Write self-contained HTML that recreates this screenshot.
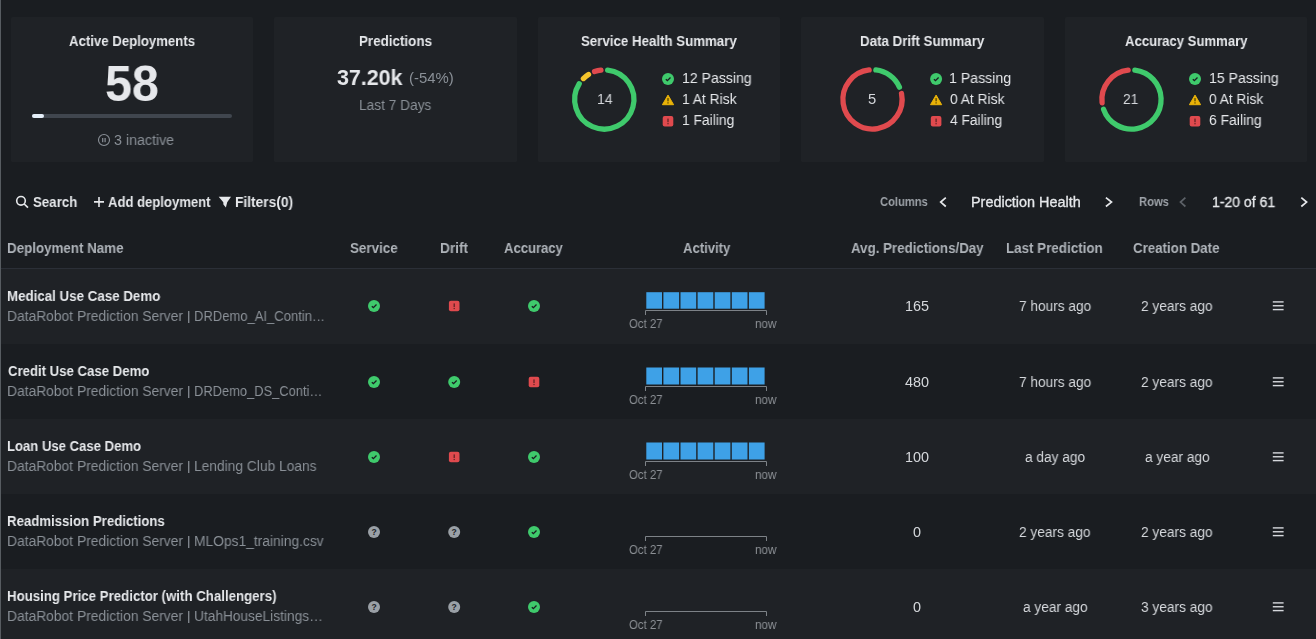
<!DOCTYPE html>
<html><head><meta charset="utf-8"><style>
html,body{margin:0;padding:0}
body{width:1316px;height:639px;overflow:hidden;background:#1a1d21;position:relative;font-family:"Liberation Sans",sans-serif}
.card{position:absolute;top:17px;height:145px;background:#1f2226;border-radius:1.5px}
.row{position:absolute;left:0;width:1316px;height:75px}
.t{position:absolute;white-space:pre;transform-origin:0 0;will-change:transform}
.lb{position:absolute;left:0;top:0;width:1px;height:639px;background:#575c61}
.hl{position:absolute;left:0;top:268px;width:1316px;height:1px;background:#2b2f37}
.track{position:absolute;left:31.7px;top:114.2px;width:200.3px;height:4px;border-radius:2px;background:#40464e}
.fill{position:absolute;left:31.7px;top:114.2px;width:12.2px;height:4px;border-radius:2px;background:#e4eef8}
svg{position:absolute;left:0;top:0}
</style></head><body>
<div class="card" style="left:11px;width:242px"></div><div class="card" style="left:274px;width:243px"></div><div class="card" style="left:538px;width:242px"></div><div class="card" style="left:801px;width:243px"></div><div class="card" style="left:1065px;width:242px"></div>
<div class="row" style="top:269px;background:#1f2226"></div><div class="row" style="top:344px;background:#1a1d21"></div><div class="row" style="top:419px;background:#1f2226"></div><div class="row" style="top:494px;background:#1a1d21"></div><div class="row" style="top:569px;background:#1f2226"></div>
<div class="hl"></div>
<div class="track"></div><div class="fill"></div>
<svg width="1316" height="639" viewBox="0 0 1316 639"><path d="M607.65 70.09A29.6 29.6 0 1 1 579.22 83.78" stroke="#3fca6c" stroke-width="5.3" stroke-linecap="round" fill="none"/><path d="M583.40 78.54A29.6 29.6 0 0 1 588.52 74.46" stroke="#f5c42b" stroke-width="5.3" stroke-linecap="round" fill="none"/><path d="M594.56 71.55A29.6 29.6 0 0 1 600.95 70.09" stroke="#e04a4e" stroke-width="5.3" stroke-linecap="round" fill="none"/><path d="M875.85 69.99A29.6 29.6 0 0 1 899.43 87.13" stroke="#3fca6c" stroke-width="5.3" stroke-linecap="round" fill="none"/><path d="M901.51 93.50A29.6 29.6 0 1 1 869.15 69.99" stroke="#e04a4e" stroke-width="5.3" stroke-linecap="round" fill="none"/><path d="M1134.85 70.09A29.6 29.6 0 1 1 1103.57 109.31" stroke="#3fca6c" stroke-width="5.3" stroke-linecap="round" fill="none"/><path d="M1102.08 102.78A29.6 29.6 0 0 1 1128.15 70.09" stroke="#e04a4e" stroke-width="5.3" stroke-linecap="round" fill="none"/><circle cx="668" cy="79" r="6" fill="#3fca6c"/><path d="M665.80 79.20L667.40 80.60L670.50 77.50" stroke="#1b1e22" stroke-width="1.3" fill="none"/><path d="M668 95.1L673.6 104.7L662.4 104.7Z" fill="#eab308" stroke="#eab308" stroke-width="1" stroke-linejoin="round"/><rect x="667.40" y="98.10" width="1.2" height="3.2" fill="#4a3a00"/><rect x="667.40" y="102.30" width="1.2" height="1.2" fill="#4a3a00"/><rect x="662.7" y="115.9" width="10.6" height="10.6" rx="2" fill="#e04a4e"/><rect x="667.40" y="118.60" width="1.2" height="3.6" fill="#5a2022"/><rect x="667.40" y="123.10" width="1.2" height="1.2" fill="#5a2022"/><circle cx="936.1" cy="79" r="6" fill="#3fca6c"/><path d="M933.90 79.20L935.50 80.60L938.60 77.50" stroke="#1b1e22" stroke-width="1.3" fill="none"/><path d="M936.1 95.1L941.7 104.7L930.5 104.7Z" fill="#eab308" stroke="#eab308" stroke-width="1" stroke-linejoin="round"/><rect x="935.50" y="98.10" width="1.2" height="3.2" fill="#4a3a00"/><rect x="935.50" y="102.30" width="1.2" height="1.2" fill="#4a3a00"/><rect x="930.8000000000001" y="115.9" width="10.6" height="10.6" rx="2" fill="#e04a4e"/><rect x="935.50" y="118.60" width="1.2" height="3.6" fill="#5a2022"/><rect x="935.50" y="123.10" width="1.2" height="1.2" fill="#5a2022"/><circle cx="1195" cy="79" r="6" fill="#3fca6c"/><path d="M1192.80 79.20L1194.40 80.60L1197.50 77.50" stroke="#1b1e22" stroke-width="1.3" fill="none"/><path d="M1195 95.1L1200.6 104.7L1189.4 104.7Z" fill="#eab308" stroke="#eab308" stroke-width="1" stroke-linejoin="round"/><rect x="1194.40" y="98.10" width="1.2" height="3.2" fill="#4a3a00"/><rect x="1194.40" y="102.30" width="1.2" height="1.2" fill="#4a3a00"/><rect x="1189.7" y="115.9" width="10.6" height="10.6" rx="2" fill="#e04a4e"/><rect x="1194.40" y="118.60" width="1.2" height="3.6" fill="#5a2022"/><rect x="1194.40" y="123.10" width="1.2" height="1.2" fill="#5a2022"/><circle cx="374" cy="306" r="6" fill="#3fca6c"/><path d="M371.80 306.20L373.40 307.60L376.50 304.50" stroke="#1b1e22" stroke-width="1.3" fill="none"/><rect x="448.9" y="300.7" width="10.6" height="10.6" rx="2" fill="#e04a4e"/><rect x="453.60" y="303.40" width="1.2" height="3.6" fill="#5a2022"/><rect x="453.60" y="307.90" width="1.2" height="1.2" fill="#5a2022"/><circle cx="534" cy="306" r="6" fill="#3fca6c"/><path d="M531.80 306.20L533.40 307.60L536.50 304.50" stroke="#1b1e22" stroke-width="1.3" fill="none"/><rect x="646.30" y="292.20" width="15.7" height="16.50" fill="#3ea1e7"/><rect x="663.40" y="292.20" width="15.7" height="16.50" fill="#3ea1e7"/><rect x="680.50" y="292.20" width="15.7" height="16.50" fill="#3ea1e7"/><rect x="697.60" y="292.20" width="15.7" height="16.50" fill="#3ea1e7"/><rect x="714.70" y="292.20" width="15.7" height="16.50" fill="#3ea1e7"/><rect x="731.80" y="292.20" width="15.7" height="16.50" fill="#3ea1e7"/><rect x="748.90" y="292.20" width="15.7" height="16.50" fill="#3ea1e7"/><path d="M645.5 315.0V310.5H766.5V315.0" stroke="#7d8287" stroke-width="1" fill="none"/><rect x="188.1" y="311" width="1.25" height="12" fill="#8a9097"/><rect x="1272.8" y="301.20" width="10.8" height="1.4" fill="#d5d8dc"/><rect x="1272.8" y="305.05" width="10.8" height="1.4" fill="#d5d8dc"/><rect x="1272.8" y="308.90" width="10.8" height="1.4" fill="#d5d8dc"/><circle cx="374" cy="382" r="6" fill="#3fca6c"/><path d="M371.80 382.20L373.40 383.60L376.50 380.50" stroke="#1b1e22" stroke-width="1.3" fill="none"/><circle cx="454.2" cy="382" r="6" fill="#3fca6c"/><path d="M452.00 382.20L453.60 383.60L456.70 380.50" stroke="#1b1e22" stroke-width="1.3" fill="none"/><rect x="528.7" y="376.7" width="10.6" height="10.6" rx="2" fill="#e04a4e"/><rect x="533.40" y="379.40" width="1.2" height="3.6" fill="#5a2022"/><rect x="533.40" y="383.90" width="1.2" height="1.2" fill="#5a2022"/><rect x="646.30" y="367.50" width="15.7" height="17.00" fill="#3ea1e7"/><rect x="663.40" y="367.50" width="15.7" height="17.00" fill="#3ea1e7"/><rect x="680.50" y="367.50" width="15.7" height="17.00" fill="#3ea1e7"/><rect x="697.60" y="367.50" width="15.7" height="17.00" fill="#3ea1e7"/><rect x="714.70" y="367.50" width="15.7" height="17.00" fill="#3ea1e7"/><rect x="731.80" y="367.50" width="15.7" height="17.00" fill="#3ea1e7"/><rect x="748.90" y="367.50" width="15.7" height="17.00" fill="#3ea1e7"/><path d="M645.5 391.0V386.5H766.5V391.0" stroke="#7d8287" stroke-width="1" fill="none"/><rect x="188.1" y="386" width="1.25" height="12" fill="#8a9097"/><rect x="1272.8" y="377.20" width="10.8" height="1.4" fill="#d5d8dc"/><rect x="1272.8" y="381.05" width="10.8" height="1.4" fill="#d5d8dc"/><rect x="1272.8" y="384.90" width="10.8" height="1.4" fill="#d5d8dc"/><circle cx="374" cy="457" r="6" fill="#3fca6c"/><path d="M371.80 457.20L373.40 458.60L376.50 455.50" stroke="#1b1e22" stroke-width="1.3" fill="none"/><rect x="448.9" y="451.7" width="10.6" height="10.6" rx="2" fill="#e04a4e"/><rect x="453.60" y="454.40" width="1.2" height="3.6" fill="#5a2022"/><rect x="453.60" y="458.90" width="1.2" height="1.2" fill="#5a2022"/><circle cx="534" cy="457" r="6" fill="#3fca6c"/><path d="M531.80 457.20L533.40 458.60L536.50 455.50" stroke="#1b1e22" stroke-width="1.3" fill="none"/><rect x="646.30" y="442.50" width="15.7" height="17.00" fill="#3ea1e7"/><rect x="663.40" y="442.50" width="15.7" height="17.00" fill="#3ea1e7"/><rect x="680.50" y="442.50" width="15.7" height="17.00" fill="#3ea1e7"/><rect x="697.60" y="442.50" width="15.7" height="17.00" fill="#3ea1e7"/><rect x="714.70" y="442.50" width="15.7" height="17.00" fill="#3ea1e7"/><rect x="731.80" y="442.50" width="15.7" height="17.00" fill="#3ea1e7"/><rect x="748.90" y="442.50" width="15.7" height="17.00" fill="#3ea1e7"/><path d="M645.5 466.0V461.5H766.5V466.0" stroke="#7d8287" stroke-width="1" fill="none"/><rect x="188.1" y="461" width="1.25" height="12" fill="#8a9097"/><rect x="1272.8" y="452.20" width="10.8" height="1.4" fill="#d5d8dc"/><rect x="1272.8" y="456.05" width="10.8" height="1.4" fill="#d5d8dc"/><rect x="1272.8" y="459.90" width="10.8" height="1.4" fill="#d5d8dc"/><circle cx="374" cy="532" r="6" fill="#9aa0a6"/><text x="374" y="535" font-family="Liberation Sans" font-weight="700" font-size="8.5" fill="#202327" text-anchor="middle">?</text><circle cx="454.2" cy="532" r="6" fill="#9aa0a6"/><text x="454.2" y="535" font-family="Liberation Sans" font-weight="700" font-size="8.5" fill="#202327" text-anchor="middle">?</text><circle cx="534" cy="532" r="6" fill="#3fca6c"/><path d="M531.80 532.20L533.40 533.60L536.50 530.50" stroke="#1b1e22" stroke-width="1.3" fill="none"/><path d="M645.5 541.0V536.5H766.5V541.0" stroke="#7d8287" stroke-width="1" fill="none"/><rect x="188.1" y="536" width="1.25" height="12" fill="#8a9097"/><rect x="1272.8" y="527.20" width="10.8" height="1.4" fill="#d5d8dc"/><rect x="1272.8" y="531.05" width="10.8" height="1.4" fill="#d5d8dc"/><rect x="1272.8" y="534.90" width="10.8" height="1.4" fill="#d5d8dc"/><circle cx="374" cy="607" r="6" fill="#9aa0a6"/><text x="374" y="610" font-family="Liberation Sans" font-weight="700" font-size="8.5" fill="#202327" text-anchor="middle">?</text><circle cx="454.2" cy="607" r="6" fill="#9aa0a6"/><text x="454.2" y="610" font-family="Liberation Sans" font-weight="700" font-size="8.5" fill="#202327" text-anchor="middle">?</text><circle cx="534" cy="607" r="6" fill="#3fca6c"/><path d="M531.80 607.20L533.40 608.60L536.50 605.50" stroke="#1b1e22" stroke-width="1.3" fill="none"/><path d="M645.5 616.0V611.5H766.5V616.0" stroke="#7d8287" stroke-width="1" fill="none"/><rect x="188.1" y="611" width="1.25" height="12" fill="#8a9097"/><rect x="1272.8" y="602.20" width="10.8" height="1.4" fill="#d5d8dc"/><rect x="1272.8" y="606.05" width="10.8" height="1.4" fill="#d5d8dc"/><rect x="1272.8" y="609.90" width="10.8" height="1.4" fill="#d5d8dc"/><circle cx="21" cy="200.8" r="4.3" stroke="#e6e8eb" stroke-width="1.6" fill="none"/><path d="M24.2 204L28 207.6" stroke="#e6e8eb" stroke-width="1.7"/><path d="M94 201.9H104M99 196.9V206.9" stroke="#e6e8eb" stroke-width="1.6"/><path d="M218.7 196.8L231 196.8L227.2 202.3L225.9 207.6L223.4 204.6L223.3 202.3Z" fill="#e6e8eb"/><path d="M945.80 197.60L940.70 202.05L945.80 206.50" stroke="#e6e8eb" stroke-width="1.7" fill="none"/><path d="M1105.90 197.60L1111.50 202.05L1105.90 206.50" stroke="#e6e8eb" stroke-width="1.7" fill="none"/><path d="M1185.40 197.60L1180.50 202.05L1185.40 206.50" stroke="#5d6268" stroke-width="1.7" fill="none"/><path d="M1301.30 197.60L1306.60 202.05L1301.30 206.50" stroke="#e6e8eb" stroke-width="1.7" fill="none"/><circle cx="104" cy="140" r="5.5" stroke="#8a9097" stroke-width="1.1" fill="none"/><rect x="102.1" y="138" width="1.2" height="4.2" fill="#8a9097"/><rect x="104.5" y="138" width="1.2" height="4.2" fill="#8a9097"/></svg>
<div class="t" style="left:68.53px;top:33.79px;font-size:14.42px;line-height:14.42px;font-weight:700;color:#e6e8eb;transform:scaleX(0.9152)">Active Deployments</div><div class="t" style="left:104.80px;top:58.75px;font-size:49.44px;line-height:49.44px;font-weight:700;color:#e6e8eb;transform:scaleX(0.9790)">58</div><div class="t" style="left:113.67px;top:132.79px;font-size:14.42px;line-height:14.42px;font-weight:400;color:#8a9097;transform:scaleX(0.9880)">3 inactive</div><div class="t" style="left:358.77px;top:33.59px;font-size:14.42px;line-height:14.42px;font-weight:700;color:#e6e8eb;transform:scaleX(0.9299)">Predictions</div><div class="t" style="left:336.81px;top:66.69px;font-size:21.63px;line-height:21.63px;font-weight:700;color:#e6e8eb;transform:scaleX(0.9910)">37.20k</div><div class="t" style="left:409.02px;top:70.79px;font-size:14.42px;line-height:14.42px;font-weight:400;color:#8a9097;transform:scaleX(1.0336)">(-54%)</div><div class="t" style="left:358.75px;top:97.79px;font-size:14.42px;line-height:14.42px;font-weight:400;color:#8a9097;transform:scaleX(0.9507)">Last 7 Days</div><div class="t" style="left:580.93px;top:34.29px;font-size:14.42px;line-height:14.42px;font-weight:700;color:#e6e8eb;transform:scaleX(0.9219)">Service Health Summary</div><div class="t" style="left:859.83px;top:34.29px;font-size:14.42px;line-height:14.42px;font-weight:700;color:#e6e8eb;transform:scaleX(0.9240)">Data Drift Summary</div><div class="t" style="left:1124.53px;top:34.29px;font-size:14.42px;line-height:14.42px;font-weight:700;color:#e6e8eb;transform:scaleX(0.9106)">Accuracy Summary</div><div class="t" style="left:596.56px;top:91.79px;font-size:14.42px;line-height:14.42px;font-weight:400;color:#d5d8dc;transform:scaleX(0.9693)">14</div><div class="t" style="left:868.30px;top:91.79px;font-size:14.42px;line-height:14.42px;font-weight:400;color:#d5d8dc;transform:scaleX(1.0227)">5</div><div class="t" style="left:1122.95px;top:91.79px;font-size:14.42px;line-height:14.42px;font-weight:400;color:#d5d8dc;transform:scaleX(0.9569)">21</div><div class="t" style="left:681.64px;top:70.89px;font-size:14.42px;line-height:14.42px;font-weight:400;color:#e6e8eb;transform:scaleX(0.9768)">12 Passing</div><div class="t" style="left:681.74px;top:91.99px;font-size:14.42px;line-height:14.42px;font-weight:400;color:#e6e8eb;transform:scaleX(0.9589)">1 At Risk</div><div class="t" style="left:681.74px;top:112.79px;font-size:14.42px;line-height:14.42px;font-weight:400;color:#e6e8eb;transform:scaleX(0.9585)">1 Failing</div><div class="t" style="left:949.34px;top:70.89px;font-size:14.42px;line-height:14.42px;font-weight:400;color:#e6e8eb;transform:scaleX(0.9820)">1 Passing</div><div class="t" style="left:949.80px;top:91.99px;font-size:14.42px;line-height:14.42px;font-weight:400;color:#e6e8eb;transform:scaleX(0.9563)">0 At Risk</div><div class="t" style="left:950.20px;top:112.79px;font-size:14.42px;line-height:14.42px;font-weight:400;color:#e6e8eb;transform:scaleX(0.9552)">4 Failing</div><div class="t" style="left:1208.94px;top:70.89px;font-size:14.42px;line-height:14.42px;font-weight:400;color:#e6e8eb;transform:scaleX(0.9768)">15 Passing</div><div class="t" style="left:1209.39px;top:91.99px;font-size:14.42px;line-height:14.42px;font-weight:400;color:#e6e8eb;transform:scaleX(0.9522)">0 At Risk</div><div class="t" style="left:1209.20px;top:112.79px;font-size:14.42px;line-height:14.42px;font-weight:400;color:#e6e8eb;transform:scaleX(0.9658)">6 Failing</div><div class="t" style="left:32.53px;top:194.79px;font-size:14.42px;line-height:14.42px;font-weight:700;color:#e6e8eb;transform:scaleX(0.9220)">Search</div><div class="t" style="left:108.33px;top:194.79px;font-size:14.42px;line-height:14.42px;font-weight:700;color:#e6e8eb;transform:scaleX(0.9083)">Add deployment</div><div class="t" style="left:234.72px;top:194.79px;font-size:14.42px;line-height:14.42px;font-weight:700;color:#e6e8eb;transform:scaleX(0.9553)">Filters(0)</div><div class="t" style="left:879.92px;top:196.44px;font-size:12.36px;line-height:12.36px;font-weight:700;color:#9ea3a9;transform:scaleX(0.9035)">Columns</div><div class="t" style="left:971.30px;top:194.69px;font-size:14.42px;line-height:14.42px;font-weight:400;color:#e6e8eb;-webkit-text-stroke:0.3px #e6e8eb;transform:scaleX(0.9963)">Prediction Health</div><div class="t" style="left:1138.91px;top:196.44px;font-size:12.36px;line-height:12.36px;font-weight:700;color:#9ea3a9;transform:scaleX(0.9094)">Rows</div><div class="t" style="left:1211.92px;top:194.69px;font-size:14.42px;line-height:14.42px;font-weight:400;color:#e6e8eb;-webkit-text-stroke:0.3px #e6e8eb;transform:scaleX(0.9752)">1-20 of 61</div><div class="t" style="left:7.41px;top:240.69px;font-size:14.42px;line-height:14.42px;font-weight:700;color:#aeb3b9;transform:scaleX(0.9270)">Deployment Name</div><div class="t" style="left:349.87px;top:240.69px;font-size:14.42px;line-height:14.42px;font-weight:700;color:#aeb3b9;transform:scaleX(0.9305)">Service</div><div class="t" style="left:439.72px;top:240.69px;font-size:14.42px;line-height:14.42px;font-weight:700;color:#aeb3b9;transform:scaleX(0.9484)">Drift</div><div class="t" style="left:504.46px;top:240.69px;font-size:14.42px;line-height:14.42px;font-weight:700;color:#aeb3b9;transform:scaleX(0.9077)">Accuracy</div><div class="t" style="left:683.26px;top:240.69px;font-size:14.42px;line-height:14.42px;font-weight:700;color:#aeb3b9;transform:scaleX(0.9092)">Activity</div><div class="t" style="left:850.66px;top:240.69px;font-size:14.42px;line-height:14.42px;font-weight:700;color:#aeb3b9;transform:scaleX(0.9235)">Avg. Predictions/Day</div><div class="t" style="left:1006.30px;top:240.69px;font-size:14.42px;line-height:14.42px;font-weight:700;color:#aeb3b9;transform:scaleX(0.9292)">Last Prediction</div><div class="t" style="left:1133.37px;top:240.69px;font-size:14.42px;line-height:14.42px;font-weight:700;color:#aeb3b9;transform:scaleX(0.9231)">Creation Date</div><div class="t" style="left:7.43px;top:289.49px;font-size:14.42px;line-height:14.42px;font-weight:700;color:#e6e8eb;transform:scaleX(0.9248)">Medical Use Case Demo</div><div class="t" style="left:7.29px;top:308.79px;font-size:14.42px;line-height:14.42px;font-weight:400;color:#8a9097;transform:scaleX(0.9599)">DataRobot Prediction Server</div><div class="t" style="left:193.81px;top:308.79px;font-size:14.42px;line-height:14.42px;font-weight:400;color:#8a9097;transform:scaleX(0.9041)">DRDemo_AI_Contin…</div><div class="t" style="left:904.60px;top:298.79px;font-size:14.42px;line-height:14.42px;font-weight:400;color:#d5d8dc;transform:scaleX(1.0000)">165</div><div class="t" style="left:1019.00px;top:298.79px;font-size:14.42px;line-height:14.42px;font-weight:400;color:#d5d8dc;transform:scaleX(0.9500)">7 hours ago</div><div class="t" style="left:1141.34px;top:298.79px;font-size:14.42px;line-height:14.42px;font-weight:400;color:#d5d8dc;transform:scaleX(0.9510)">2 years ago</div><div class="t" style="left:628.80px;top:317.54px;font-size:12.36px;line-height:12.36px;font-weight:400;color:#8d9196;transform:scaleX(0.9222)">Oct 27</div><div class="t" style="left:754.86px;top:317.54px;font-size:12.36px;line-height:12.36px;font-weight:400;color:#8d9196;transform:scaleX(0.9435)">now</div><div class="t" style="left:7.72px;top:364.49px;font-size:14.42px;line-height:14.42px;font-weight:700;color:#e6e8eb;transform:scaleX(0.9143)">Credit Use Case Demo</div><div class="t" style="left:7.29px;top:383.79px;font-size:14.42px;line-height:14.42px;font-weight:400;color:#8a9097;transform:scaleX(0.9601)">DataRobot Prediction Server</div><div class="t" style="left:193.80px;top:383.79px;font-size:14.42px;line-height:14.42px;font-weight:400;color:#8a9097;transform:scaleX(0.8949)">DRDemo_DS_Conti…</div><div class="t" style="left:905.10px;top:374.79px;font-size:14.42px;line-height:14.42px;font-weight:400;color:#d5d8dc;transform:scaleX(1.0000)">480</div><div class="t" style="left:1019.00px;top:374.79px;font-size:14.42px;line-height:14.42px;font-weight:400;color:#d5d8dc;transform:scaleX(0.9500)">7 hours ago</div><div class="t" style="left:1141.34px;top:374.79px;font-size:14.42px;line-height:14.42px;font-weight:400;color:#d5d8dc;transform:scaleX(0.9510)">2 years ago</div><div class="t" style="left:628.80px;top:393.54px;font-size:12.36px;line-height:12.36px;font-weight:400;color:#8d9196;transform:scaleX(0.9222)">Oct 27</div><div class="t" style="left:754.86px;top:393.54px;font-size:12.36px;line-height:12.36px;font-weight:400;color:#8d9196;transform:scaleX(0.9435)">now</div><div class="t" style="left:7.42px;top:439.49px;font-size:14.42px;line-height:14.42px;font-weight:700;color:#e6e8eb;transform:scaleX(0.9098)">Loan Use Case Demo</div><div class="t" style="left:7.29px;top:458.79px;font-size:14.42px;line-height:14.42px;font-weight:400;color:#8a9097;transform:scaleX(0.9599)">DataRobot Prediction Server</div><div class="t" style="left:193.79px;top:458.79px;font-size:14.42px;line-height:14.42px;font-weight:400;color:#8a9097;transform:scaleX(0.9556)">Lending Club Loans</div><div class="t" style="left:904.60px;top:449.79px;font-size:14.42px;line-height:14.42px;font-weight:400;color:#d5d8dc;transform:scaleX(1.0000)">100</div><div class="t" style="left:1025.17px;top:449.79px;font-size:14.42px;line-height:14.42px;font-weight:400;color:#d5d8dc;transform:scaleX(0.9500)">a day ago</div><div class="t" style="left:1144.67px;top:449.79px;font-size:14.42px;line-height:14.42px;font-weight:400;color:#d5d8dc;transform:scaleX(0.9510)">a year ago</div><div class="t" style="left:628.80px;top:468.54px;font-size:12.36px;line-height:12.36px;font-weight:400;color:#8d9196;transform:scaleX(0.9222)">Oct 27</div><div class="t" style="left:754.86px;top:468.54px;font-size:12.36px;line-height:12.36px;font-weight:400;color:#8d9196;transform:scaleX(0.9435)">now</div><div class="t" style="left:7.43px;top:514.49px;font-size:14.42px;line-height:14.42px;font-weight:700;color:#e6e8eb;transform:scaleX(0.9168)">Readmission Predictions</div><div class="t" style="left:7.29px;top:533.79px;font-size:14.42px;line-height:14.42px;font-weight:400;color:#8a9097;transform:scaleX(0.9601)">DataRobot Prediction Server</div><div class="t" style="left:193.80px;top:533.79px;font-size:14.42px;line-height:14.42px;font-weight:400;color:#8a9097;transform:scaleX(0.9580)">MLOps1_training.csv</div><div class="t" style="left:913.10px;top:524.79px;font-size:14.42px;line-height:14.42px;font-weight:400;color:#d5d8dc;transform:scaleX(1.0000)">0</div><div class="t" style="left:1019.47px;top:524.79px;font-size:14.42px;line-height:14.42px;font-weight:400;color:#d5d8dc;transform:scaleX(0.9500)">2 years ago</div><div class="t" style="left:1141.34px;top:524.79px;font-size:14.42px;line-height:14.42px;font-weight:400;color:#d5d8dc;transform:scaleX(0.9510)">2 years ago</div><div class="t" style="left:628.80px;top:543.54px;font-size:12.36px;line-height:12.36px;font-weight:400;color:#8d9196;transform:scaleX(0.9222)">Oct 27</div><div class="t" style="left:754.86px;top:543.54px;font-size:12.36px;line-height:12.36px;font-weight:400;color:#8d9196;transform:scaleX(0.9435)">now</div><div class="t" style="left:7.42px;top:589.49px;font-size:14.42px;line-height:14.42px;font-weight:700;color:#e6e8eb;transform:scaleX(0.9197)">Housing Price Predictor (with Challengers)</div><div class="t" style="left:7.29px;top:608.79px;font-size:14.42px;line-height:14.42px;font-weight:400;color:#8a9097;transform:scaleX(0.9599)">DataRobot Prediction Server</div><div class="t" style="left:193.82px;top:608.79px;font-size:14.42px;line-height:14.42px;font-weight:400;color:#8a9097;transform:scaleX(0.9515)">UtahHouseListings…</div><div class="t" style="left:913.10px;top:599.79px;font-size:14.42px;line-height:14.42px;font-weight:400;color:#d5d8dc;transform:scaleX(1.0000)">0</div><div class="t" style="left:1022.80px;top:599.79px;font-size:14.42px;line-height:14.42px;font-weight:400;color:#d5d8dc;transform:scaleX(0.9500)">a year ago</div><div class="t" style="left:1141.34px;top:599.79px;font-size:14.42px;line-height:14.42px;font-weight:400;color:#d5d8dc;transform:scaleX(0.9510)">3 years ago</div><div class="t" style="left:628.80px;top:618.54px;font-size:12.36px;line-height:12.36px;font-weight:400;color:#8d9196;transform:scaleX(0.9222)">Oct 27</div><div class="t" style="left:754.86px;top:618.54px;font-size:12.36px;line-height:12.36px;font-weight:400;color:#8d9196;transform:scaleX(0.9435)">now</div>
<div class="lb"></div>
</body></html>
